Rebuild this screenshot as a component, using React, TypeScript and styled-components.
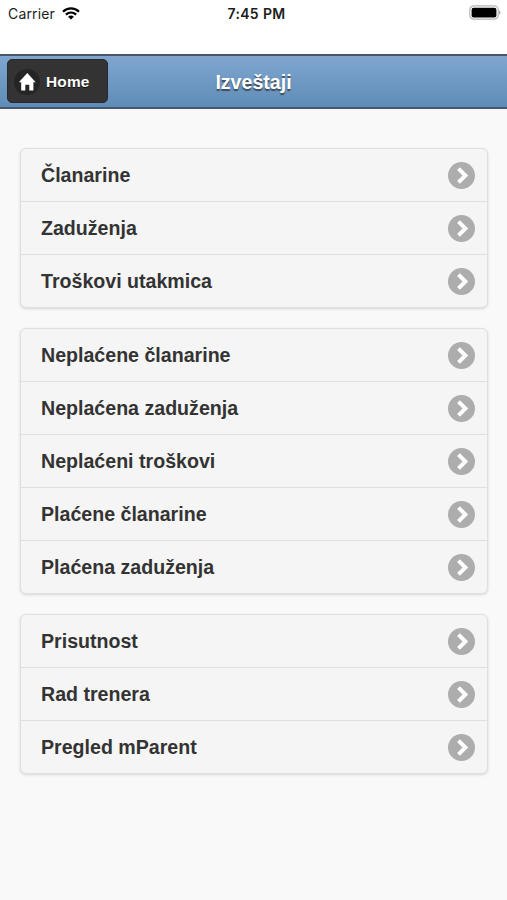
import React from "react";
import styled, { createGlobalStyle } from "styled-components";

const GlobalStyle = createGlobalStyle`
  * { box-sizing: border-box; }
  body {
    margin: 0;
    background: #f9f9f9;
    color: #333;
    font-family: "Liberation Sans", Arial, sans-serif;
  }
`;

const Screen = styled.div`
  display: flex;
  flex-direction: column;
  height: 900px;
  background: #f9f9f9;
`;

const StatusBar = styled.div`
  display: grid;
  grid-template-columns: 1fr auto 1fr;
  align-items: start;
  height: 54px;
  padding: 4px 6px 0 8px;
  background: #fff;
  color: #1c1c1c;
  font-family: Inter, sans-serif;
  font-size: 14px;
  line-height: 20px;
`;

const Carrier = styled.div`
  display: flex;
  align-items: center;
  gap: 7px;
  letter-spacing: 0.15px;
  svg { margin-top: -2px; }
`;

const Clock = styled.div`
  padding-left: 4px;
  font-weight: 600;
  letter-spacing: 0.35px;
`;

const BatterySlot = styled.div`
  display: flex;
  justify-content: flex-end;
  padding-top: 1px;
`;

const Header = styled.header`
  display: grid;
  grid-template-columns: 1fr auto 1fr;
  align-items: center;
  height: 55px;
  padding: 0 7px;
  border-top: 2px solid #4a5663;
  border-bottom: 2px solid #46586b;
  background: linear-gradient(#7fa6cf, #5f8cb7);
`;

const HomeButton = styled.button`
  display: flex;
  align-items: center;
  gap: 6px;
  width: 101px;
  height: 44px;
  margin-top: -1px;
  padding: 1px 0 0 6px;
  border: 1px solid #262a2e;
  border-radius: 5px;
  background: #333;
  color: #fff;
  font: bold 15.4px "Liberation Sans", Arial, sans-serif;
  letter-spacing: 0.2px;
  text-shadow: 0 1px 0 #111;
`;

const IconDisc = styled.span`
  display: flex;
  width: 26px;
  height: 26px;
  border-radius: 50%;
  background: #242424;
`;

const Title = styled.h1`
  margin: 0;
  color: #fff;
  font-size: 19.6px;
  line-height: 26px;
  text-shadow: 0 1.5px 1px #3e4c59;
`;

const Content = styled.main`
  display: flex;
  flex-direction: column;
  gap: 20px;
  padding: 39px 19.5px 0 20px;
`;

const List = styled.ul`
  margin: 0;
  padding: 0;
  list-style: none;
  border: 1px solid #dfdfdf;
  border-radius: 6px;
  background: #f5f5f5;
  box-shadow: 0 1px 3px rgba(0, 0, 0, 0.14);
`;

const Row = styled.li`
  display: flex;
  align-items: center;
  justify-content: space-between;
  height: 52px;
  padding: 0 11.5px 0 20px;
  font-size: 19.6px;
  font-weight: bold;
  line-height: 26px;
  & + & {
    height: 53px;
    border-top: 1px solid #dfdfdf;
  }
`;

const groups = [
  ["Članarine", "Zaduženja", "Troškovi utakmica"],
  [
    "Neplaćene članarine",
    "Neplaćena zaduženja",
    "Neplaćeni troškovi",
    "Plaćene članarine",
    "Plaćena zaduženja",
  ],
  ["Prisutnost", "Rad trenera", "Pregled mParent"],
];

const WifiIcon = () => (
  <svg width="18" height="13" viewBox="0 0 18 13" fill="none" stroke="#000" strokeWidth="2.3">
    <path d="M1 4.7C5.5.3 12.5.3 17 4.7" />
    <path d="M3.9 7.7c3-2.8 7.2-2.8 10.2 0" />
    <path d="M9 12.5 6.1 9.7c1.7-1.5 4.1-1.5 5.8 0Z" fill="#000" stroke="none" />
  </svg>
);

const BatteryIcon = () => (
  <svg width="32" height="15" viewBox="0 0 32 15">
    <rect x=".8" y=".8" width="28.4" height="13.4" rx="4" fill="#fff" stroke="#b5b5b5" strokeWidth="1.2" />
    <rect x="2.6" y="2.8" width="24.8" height="9.6" rx="2" fill="#000" />
    <path d="M30.2 5.3c1.7.7 1.7 3.7 0 4.4Z" fill="#999" />
  </svg>
);

const HomeIcon = () => (
  <svg width="26" height="26" viewBox="0 0 26 26" fill="#fff">
    <path d="M13.3 4 4.9 13.2H7.2V21.6H11.3V15.8H15.3V21.6H19.4V13.2H21.7Z" />
  </svg>
);

const ChevronIcon = () => (
  <svg width="27" height="27" viewBox="0 0 27 27">
    <circle cx="13.5" cy="13.5" r="13.5" fill="#adadad" />
    <path d="m10.5 6.7 6.9 6.8-6.9 6.8" fill="none" stroke="#fff" strokeWidth="4" />
  </svg>
);

export default function App() {
  return (
    <>
      <GlobalStyle />
      <Screen>
        <StatusBar>
          <Carrier>
            <span>Carrier</span>
            <WifiIcon />
          </Carrier>
          <Clock>7:45 PM</Clock>
          <BatterySlot>
            <BatteryIcon />
          </BatterySlot>
        </StatusBar>
        <Header>
          <HomeButton>
            <IconDisc>
              <HomeIcon />
            </IconDisc>
            Home
          </HomeButton>
          <Title>Izveštaji</Title>
        </Header>
        <Content>
          {groups.map((items) => (
            <List key={items[0]}>
              {items.map((item) => (
                <Row key={item}>
                  <span>{item}</span>
                  <ChevronIcon />
                </Row>
              ))}
            </List>
          ))}
        </Content>
      </Screen>
    </>
  );
}
